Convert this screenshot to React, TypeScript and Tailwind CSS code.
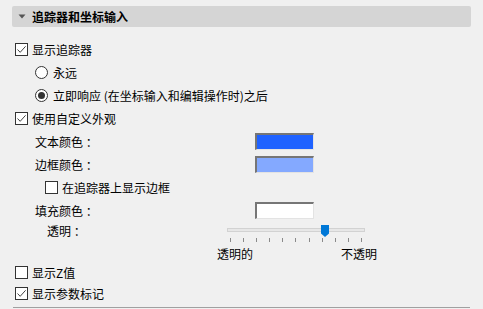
import React from 'react';

const Check: React.FC<{ checked?: boolean }> = ({ checked }) => (
  <span className="w-[13px] h-[13px] border border-[#333] bg-white flex items-center justify-center shrink-0">
    {checked && (
      <svg width="11" height="11" viewBox="0 0 11 11">
        <path d="M1.5 5.5 L4.2 8.3 L9.6 2.3" fill="none" stroke="#444" strokeWidth="1" />
      </svg>
    )}
  </span>
);

const Radio: React.FC<{ checked?: boolean }> = ({ checked }) => (
  <span className="w-[13px] h-[13px] rounded-full border border-[#333] bg-white flex items-center justify-center shrink-0">
    {checked && <span className="w-[7px] h-[7px] rounded-full bg-[#333]"></span>}
  </span>
);

const Swatch: React.FC<{ color: string }> = ({ color }) => (
  <div
    className={`w-[59px] h-[17px] border-t-2 border-l-2 border-b border-r border-t-[#767676] border-l-[#767676] border-b-[#e3e3e3] border-r-[#e3e3e3] ${color}`}
  ></div>
);

const ticks = [0, 1, 2, 3, 4, 5, 6, 7, 8, 9, 10];

export default function App() {
  return (
    <div
      className="w-[483px] h-[309px] bg-[#f0f0f0] text-[12px] text-black pt-[6px] overflow-hidden"
      style={{ fontFamily: '"Noto Sans CJK SC", "Noto Sans", sans-serif' }}
    >
      <div className="mx-[12px] h-[21px] bg-[#d5d5d5] rounded-[2px] flex items-center pl-[6px] gap-[6px]">
        <svg width="8" height="5" viewBox="0 0 8 5">
          <path d="M0.5 0.5 L7.5 0.5 L4 4.5 Z" fill="#555" />
        </svg>
        <span className="font-bold leading-none">追踪器和坐标输入</span>
      </div>

      <div className="mt-[11px] flex flex-col">
        <div className="h-[23px] flex items-center pl-[15px] gap-[4px]">
          <Check checked />
          <span>显示追踪器</span>
        </div>
        <div className="h-[23px] flex items-center pl-[35px] gap-[5px]">
          <Radio />
          <span>永远</span>
        </div>
        <div className="h-[23px] flex items-center pl-[35px] gap-[5px]">
          <Radio checked />
          <span>立即响应 (在坐标输入和编辑操作时)之后</span>
        </div>
        <div className="h-[23px] flex items-center pl-[15px] gap-[4px]">
          <Check checked />
          <span>使用自定义外观</span>
        </div>
        <div className="h-[23px] flex items-center pl-[35px]">
          <span className="w-[220px]">文本颜色 ：</span>
          <Swatch color="bg-[#1f62ff]" />
        </div>
        <div className="h-[23px] flex items-center pl-[35px]">
          <span className="w-[220px]">边框颜色 ：</span>
          <Swatch color="bg-[#84a9ff]" />
        </div>
        <div className="h-[23px] flex items-center pl-[45px] gap-[4px]">
          <Check />
          <span>在追踪器上显示边框</span>
        </div>
        <div className="h-[23px] flex items-center pl-[35px]">
          <span className="w-[220px]">填充颜色 ：</span>
          <Swatch color="bg-white" />
        </div>

        <div className="h-[22px] flex pl-[47px]">
          <span className="w-[180px]">透明 ：</span>
          <div className="relative w-[138px] h-[22px]">
            <div className="absolute left-0 right-0 top-[6px] h-[4px] bg-[#e7e7e7] border border-[#d2d2d2]"></div>
            <div className="absolute top-[16px] left-0 right-0 flex justify-between px-[3px]">
              {ticks.map(t => (
                <span key={t} className="w-px h-[4px] bg-[#8a8a8a]"></span>
              ))}
            </div>
            <svg className="absolute left-[94px] top-[3px]" width="8" height="12" viewBox="0 0 8 12">
              <path d="M0 0 H8 V8.5 L4 12 L0 8.5 Z" fill="#0078d7" />
            </svg>
          </div>
        </div>

        <div className="h-[19px] flex items-center pl-[217px]">
          <span className="w-[124px]">透明的</span>
          <span>不透明</span>
        </div>

        <div className="h-[19px] flex items-center pl-[15px] gap-[4px]">
          <Check />
          <span>显示Z值</span>
        </div>
        <div className="h-[23px] flex items-center pl-[15px] gap-[4px]">
          <Check checked />
          <span>显示参数标记</span>
        </div>
        <div className="mt-[2px] mx-[13px] h-px bg-[#a0a0a0]"></div>
      </div>
    </div>
  );
}
